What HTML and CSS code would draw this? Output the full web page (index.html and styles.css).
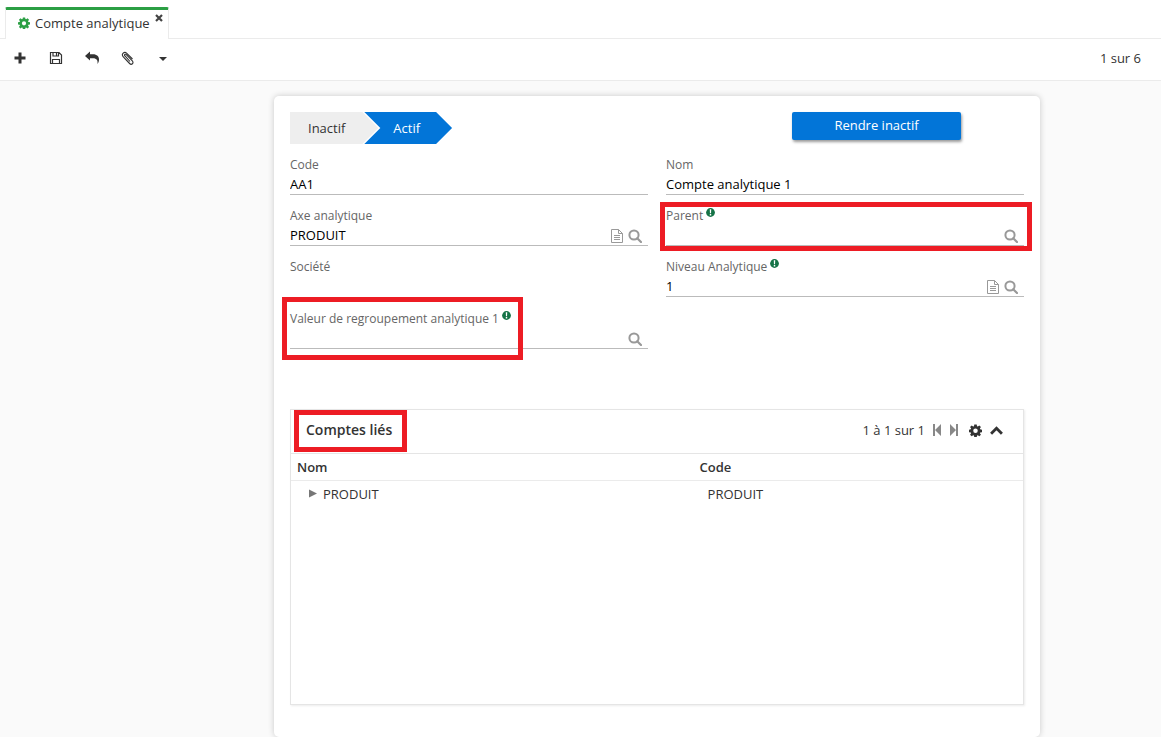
FILE: index.html
```html
<!DOCTYPE html>
<html lang="fr">
<head>
<meta charset="utf-8">
<title>Compte analytique</title>
<link rel="stylesheet" href="styles.css">
</head>
<body>
<svg class="defs" aria-hidden="true">
  <symbol id="gear" viewBox="0 0 16 16"><path fill="currentColor" fill-rule="evenodd" d="M6.500.5h3l.4 2.200 1 .4 1.800-1.300 2 2-1.300 1.800.4 1 2.200.4v3l-2.200.4-.4 1 1.300 1.800-2 2-1.800-1.300-1 .4-.4 2.200h-3l-.4-2.200-1-.4-1.800 1.300-2-2 1.300-1.800-.4-1L0 10V7l2.200-.4.4-1-1.300-1.800 2-2 1.800 1.300 1-.4zM8 5.600a2.800 2.800 0 1 0 0 5.600 2.800 2.800 0 0 0 0-5.600z"/></symbol>
  <symbol id="search" viewBox="0 0 14 14"><circle cx="6" cy="6" r="4.600" fill="none" stroke="currentColor" stroke-width="2"/><path d="M9.200 9.200 13 13" stroke="currentColor" stroke-width="2.200" stroke-linecap="round"/></symbol>
  <symbol id="doc" viewBox="0 0 14 14"><path d="M1.500.5h7l4 4v9h-11zM8.500.5v4h4M4 6.500h6M4 8.500h6M4 10.500h6" fill="none" stroke="currentColor"/></symbol>
  <symbol id="info" viewBox="0 0 10 10"><circle cx="5" cy="5" r="4.900" fill="currentColor"/><path d="M4.200 1.500h1.600L5.600 5.800H4.400zM4.200 6.700h1.600v1.500H4.200z" fill="#fff"/></symbol>
</svg>

<nav class="tabs">
  <div class="tab">
    <svg class="tab-gear"><use href="#gear"/></svg>
    <span>Compte analytique</span>
    <button class="tab-close" aria-label="Fermer"><svg viewBox="0 0 8 8"><path d="M1 1l6 6M7 1L1 7" stroke="currentColor" stroke-width="2.200"/></svg></button>
  </div>
</nav>

<header class="toolbar">
  <button class="tool" aria-label="Nouveau"><svg viewBox="0 0 14 14"><path d="M7 1.500v11M1.500 7h11" stroke="currentColor" stroke-width="3"/></svg></button>
  <button class="tool" aria-label="Enregistrer"><svg viewBox="0 0 14 14"><path d="M1.500 1.500h8.500l2.500 2.500v8.500h-11zM4 1.500V5h5.500V1.500M3.500 12.500V8.500h7v4M7.500 2v2.500" fill="none" stroke="currentColor" stroke-width="1.200"/></svg></button>
  <button class="tool" aria-label="Annuler"><svg viewBox="0 0 14 14"><path d="M0 5 5 .5v2.700h3c4 0 6 2.300 6 5.300 0 1.800-.6 3.300-1.500 4.500.5-3.500-.7-5.700-4.500-5.700H5V9.500z" fill="currentColor"/></svg></button>
  <button class="tool" aria-label="Joindre"><svg viewBox="0 0 14 14"><path d="M9 10.500 4 5C2.800 3.800 4.200 2.500 5.300 3.600l6 6.300c2 2.100-.8 4.600-2.700 2.600L2.300 5.800C-.2 3.100 3.300-.2 5.800 2.300l5.700 5.700" fill="none" stroke="currentColor" stroke-width="1.100"/></svg></button>
  <button class="tool" aria-label="Plus"><svg viewBox="0 0 14 14"><path d="M2 6h8l-4 4z" fill="currentColor"/></svg></button>
  <span class="pager">1 sur 6</span>
</header>

<main class="content">
  <form class="card">
    <div class="top">
      <div class="status">
        <span class="step">Inactif</span>
        <span class="step step-active">Actif</span>
      </div>
      <button type="button" class="primary">Rendre inactif</button>
    </div>

    <div class="fields">
      <div class="field">
        <label for="code">Code</label>
        <div class="control"><input id="code" value="AA1"></div>
      </div>
      <div class="field">
        <label for="nom">Nom</label>
        <div class="control"><input id="nom" value="Compte analytique 1"></div>
      </div>
      <div class="field">
        <label for="axe">Axe analytique</label>
        <div class="control"><input id="axe" value="PRODUIT">
          <button type="button" class="pick" aria-label="Ouvrir"><svg><use href="#doc"/></svg></button>
          <button type="button" class="pick" aria-label="Rechercher"><svg><use href="#search"/></svg></button></div>
      </div>
      <div class="field">
        <label for="parent">Parent<svg class="info"><use href="#info"/></svg></label>
        <div class="control"><input id="parent">
          <button type="button" class="pick" aria-label="Rechercher"><svg><use href="#search"/></svg></button></div>
        <span class="mark mark-parent"></span>
      </div>
      <div class="field field-readonly">
        <span class="label">Société</span>
      </div>
      <div class="field">
        <label for="niveau">Niveau Analytique<svg class="info"><use href="#info"/></svg></label>
        <div class="control"><input id="niveau" value="1">
          <button type="button" class="pick" aria-label="Ouvrir"><svg><use href="#doc"/></svg></button>
          <button type="button" class="pick" aria-label="Rechercher"><svg><use href="#search"/></svg></button></div>
      </div>
      <div class="field">
        <label for="valeur">Valeur de regroupement analytique 1<svg class="info"><use href="#info"/></svg></label>
        <div class="control"><input id="valeur">
          <button type="button" class="pick" aria-label="Rechercher"><svg><use href="#search"/></svg></button></div>
        <span class="mark mark-value"></span>
      </div>
    </div>

    <section class="panel">
      <div class="panel-head">
        <h2>Comptes liés<span class="mark mark-title"></span></h2>
        <span class="count">1 à 1 sur 1</span>
        <button type="button" class="nav" aria-label="Précédent"><svg viewBox="0 0 10 12"><path d="M1 0h2v12H1zM9 0v12L3 6z" fill="currentColor"/></svg></button>
        <button type="button" class="nav" aria-label="Suivant"><svg viewBox="0 0 10 12"><path d="M7 0h2v12H7zM1 0v12l6-6z" fill="currentColor"/></svg></button>
        <button type="button" class="act" aria-label="Options"><svg><use href="#gear"/></svg></button>
        <button type="button" class="act" aria-label="Replier"><svg viewBox="0 0 12 12"><path d="M1 9l5-5 5 5" fill="none" stroke="currentColor" stroke-width="2.600"/></svg></button>
      </div>
      <table>
        <thead><tr><th>Nom</th><th>Code</th></tr></thead>
        <tbody><tr><td><div class="node"><svg viewBox="0 0 8 8"><path d="M0 0l8 4-8 4z" fill="currentColor"/></svg>PRODUIT</div></td><td>PRODUIT</td></tr></tbody>
      </table>
    </section>
  </form>
</main>
</body>
</html>
```
FILE: styles.css
```css
* { box-sizing: border-box; }
body {
  margin: 0;
  min-height: 100vh;
  display: flex;
  flex-direction: column;
  background: #fafafa;
  color: #333;
  font: 13px/18px "Open Sans", sans-serif;
}
button, input {
  margin: 0;
  padding: 0;
  border: 0;
  background: none;
  color: inherit;
  font: inherit;
}
svg { display: block; }
.defs { position: absolute; width: 0; height: 0; }

.tabs {
  display: flex;
  height: 39px;
  padding: 7px 5px 0;
  background: #fff;
  border-bottom: 1px solid #ebebeb;
}
.tab {
  display: flex;
  align-items: center;
  height: 32px;
  padding: 0 5px 3px 12px;
  background: #fff;
  border: 1px solid #ebebeb;
  border-top: 3px solid #2b9f44;
  border-bottom: 0;
  border-radius: 2px 2px 0 0;
}
.tab-gear { width: 12px; height: 12px; margin-right: 5px; color: #2b9f44; }
.tab-close { align-self: flex-start; margin: 4px 0 0 5px; color: #444; }
.tab-close svg { width: 8px; height: 8px; }

.toolbar {
  display: flex;
  align-items: center;
  gap: 22px;
  height: 42px;
  padding: 0 20px 3px 13px;
  background: #fff;
  border-bottom: 1px solid #ebebeb;
}
.tool svg { width: 14px; height: 14px; }
.pager { margin-left: auto; }

.content { padding: 15px 121px 0 274px; }
.card {
  padding: 16px 16px 32px;
  background: #fff;
  border-radius: 5px;
  box-shadow: 0 0 6px rgba(0, 0, 0, .2);
}
.top, .fields {
  display: grid;
  grid-template-columns: 1fr 1fr;
  column-gap: 18px;
}
.top { align-items: start; }
.status { display: flex; }
.step {
  height: 32px;
  padding: 0 33px 0 18px;
  line-height: 32px;
  background: #eee;
  clip-path: polygon(0 0, calc(100% - 16px) 0, 100% 50%, calc(100% - 16px) 100%, 0 100%);
}
.step-active {
  margin-left: -14px;
  padding: 0 32px 0 29px;
  background: #0275d8;
  color: #fff;
  clip-path: polygon(0 0, calc(100% - 16px) 0, 100% 50%, calc(100% - 16px) 100%, 0 100%, 16px 50%);
}
.primary {
  justify-self: end;
  width: 169px;
  height: 28px;
  padding-bottom: 2px;
  margin-right: 63px;
  background: #0275d8;
  color: #fff;
  border-radius: 2px;
  box-shadow: 1px 2px 3px rgba(0, 0, 0, .4);
}

.fields { margin-top: 12px; row-gap: 12px; align-items: start; }
.field { position: relative; height: 39px; }
.field-readonly { height: 40px; }
.field label, .label { display: flex; height: 18px; color: #666; font-size: 12px; }
.info { width: 9px; height: 9px; margin: 1px 0 0 3px; color: #157347; }
.control {
  display: flex;
  align-items: center;
  gap: 4px;
  height: 21px;
  padding-right: 6px;
  border-bottom: 1px solid #bbb;
}
.control input { flex: 1; min-width: 0; height: 20px; color: #000; outline: 0; }
.pick { padding-top: 2px; color: #999; }
.pick svg { width: 14px; height: 14px; }
.mark { position: absolute; border: 5px solid #ed1c24; pointer-events: none; }
.mark-parent { inset: -5px -8px -5px -6px; }
.mark-value { top: -13px; left: -8px; width: 241px; height: 63px; }
.mark-title { inset: 0 -15px -2px -12px; }

.panel {
  min-height: 296px;
  margin-top: 60px;
  border: 1px solid #e5e5e5;
  box-shadow: 1px 1px 2px rgba(0, 0, 0, .08);
}
.panel-head {
  display: flex;
  align-items: center;
  height: 44px;
  padding: 0 20px 3px 15px;
  border-bottom: 1px solid #e5e5e5;
}
h2 {
  position: relative;
  margin: 0 auto 0 0;
  font-size: 14px;
  font-weight: 600;
  line-height: 40px;
}
.nav { margin-left: 7px; color: #888; }
.nav svg { width: 10px; height: 12px; }
.act { margin-left: 8px; }
.nav + .act { margin-left: 10px; }
.act svg { width: 13px; height: 13px; }
table { width: 100%; border-collapse: collapse; table-layout: fixed; }
th { height: 26px; padding: 0 6px; border-bottom: 1px solid #ebebeb; text-align: left; font-weight: 600; }
th:first-child { width: 55%; }
td { height: 27px; padding: 0 14px; }
.node { display: flex; align-items: center; gap: 6px; padding-left: 4px; }
.node svg { width: 8px; height: 9px; color: #777; }
```
